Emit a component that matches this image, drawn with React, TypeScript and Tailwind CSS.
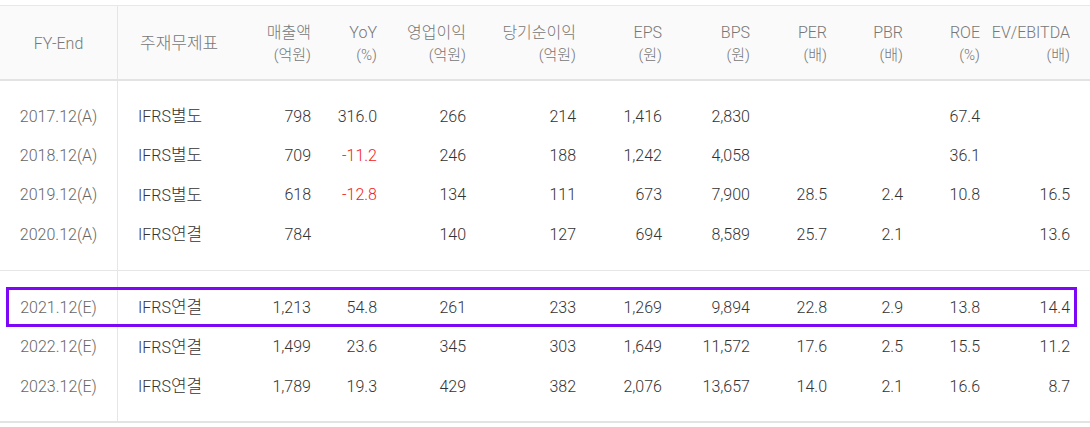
const cols =
  "grid grid-cols-[118px_132px_61px_66px_89px_110px_86px_88px_77px_76px_77px_90px] pr-[20px]";

type Row = {
  fy: string;
  kind: string;
  v: (string | null)[];
};

const headers: [string, string][] = [
  ["매출액", "(억원)"],
  ["YoY", "(%)"],
  ["영업이익", "(억원)"],
  ["당기순이익", "(억원)"],
  ["EPS", "(원)"],
  ["BPS", "(원)"],
  ["PER", "(배)"],
  ["PBR", "(배)"],
  ["ROE", "(%)"],
  ["EV/EBITDA", "(배)"],
];

const actual: Row[] = [
  { fy: "2017.12(A)", kind: "별도", v: ["798", "316.0", "266", "214", "1,416", "2,830", null, null, "67.4", null] },
  { fy: "2018.12(A)", kind: "별도", v: ["709", "-11.2", "246", "188", "1,242", "4,058", null, null, "36.1", null] },
  { fy: "2019.12(A)", kind: "별도", v: ["618", "-12.8", "134", "111", "673", "7,900", "28.5", "2.4", "10.8", "16.5"] },
  { fy: "2020.12(A)", kind: "연결", v: ["784", null, "140", "127", "694", "8,589", "25.7", "2.1", null, "13.6"] },
];

const estimate: Row[] = [
  { fy: "2021.12(E)", kind: "연결", v: ["1,213", "54.8", "261", "233", "1,269", "9,894", "22.8", "2.9", "13.8", "14.4"] },
  { fy: "2022.12(E)", kind: "연결", v: ["1,499", "23.6", "345", "303", "1,649", "11,572", "17.6", "2.5", "15.5", "11.2"] },
  { fy: "2023.12(E)", kind: "연결", v: ["1,789", "19.3", "429", "382", "2,076", "13,657", "14.0", "2.1", "16.6", "8.7"] },
];

// keeps the FY-End column divider running through the group padding
function Spacer({ h }: { h: string }) {
  return <div className={`${h} w-[118px] border-r border-[#e6e6e6]`} />;
}

function DataRow({ row }: { row: Row }) {
  return (
    <div className={`${cols} h-[39.33px] items-center text-[16px] text-[#333]`}>
      <div className="flex h-full items-center justify-center border-r border-[#e6e6e6] text-[#666]">
        {row.fy}
      </div>
      <div className="pl-[20px]">
        IFRS<span className="text-[17px]">{row.kind}</span>
      </div>
      {row.v.map((val, i) => (
        <div
          key={i}
          className={
            val && val.startsWith("-") ? "text-right text-[#f21b1b]" : "text-right"
          }
        >
          {val}
        </div>
      ))}
    </div>
  );
}

export default function App() {
  return (
    <div className="relative h-[427px] w-[1090px] bg-white pt-[5px] font-light font-['Roboto','Noto_Sans_CJK_KR',sans-serif]">
      {/* header */}
      <div
        className={`${cols} h-[76px] border-t border-b-2 border-t-[#e8e8e8] border-b-[#e3e3e3] bg-[#fafafa] text-[16px] text-[#777]`}
      >
        <div className="flex items-center justify-center border-r border-[#e6e6e6] pt-[3px]">
          FY-End
        </div>
        <div className="flex items-center pl-[22px] pt-[3px] text-[17px]">주재무제표</div>
        {headers.map(([a, b]) => (
          <div
            key={a}
            className="flex flex-col items-end justify-center pt-[3px] leading-[22px]"
          >
            <span className="whitespace-nowrap">{a}</span>
            <span className="text-[15px]">{b}</span>
          </div>
        ))}
      </div>

      {/* actuals */}
      <div>
        <Spacer h="h-[16px]" />
        {actual.map((r) => (
          <DataRow key={r.fy} row={r} />
        ))}
        <Spacer h="h-[16px]" />
      </div>

      {/* estimates */}
      <div className="border-t border-b-2 border-t-[#e6e6e6] border-b-[#e3e3e3]">
        <Spacer h="h-[17px]" />
        {estimate.map((r) => (
          <DataRow key={r.fy} row={r} />
        ))}
        <Spacer h="h-[15px]" />
      </div>

      {/* highlight */}
      <div className="pointer-events-none absolute left-[6px] top-[287px] h-[40px] w-[1071px] border-[3px] border-[#7f07f7]" />
    </div>
  );
}
